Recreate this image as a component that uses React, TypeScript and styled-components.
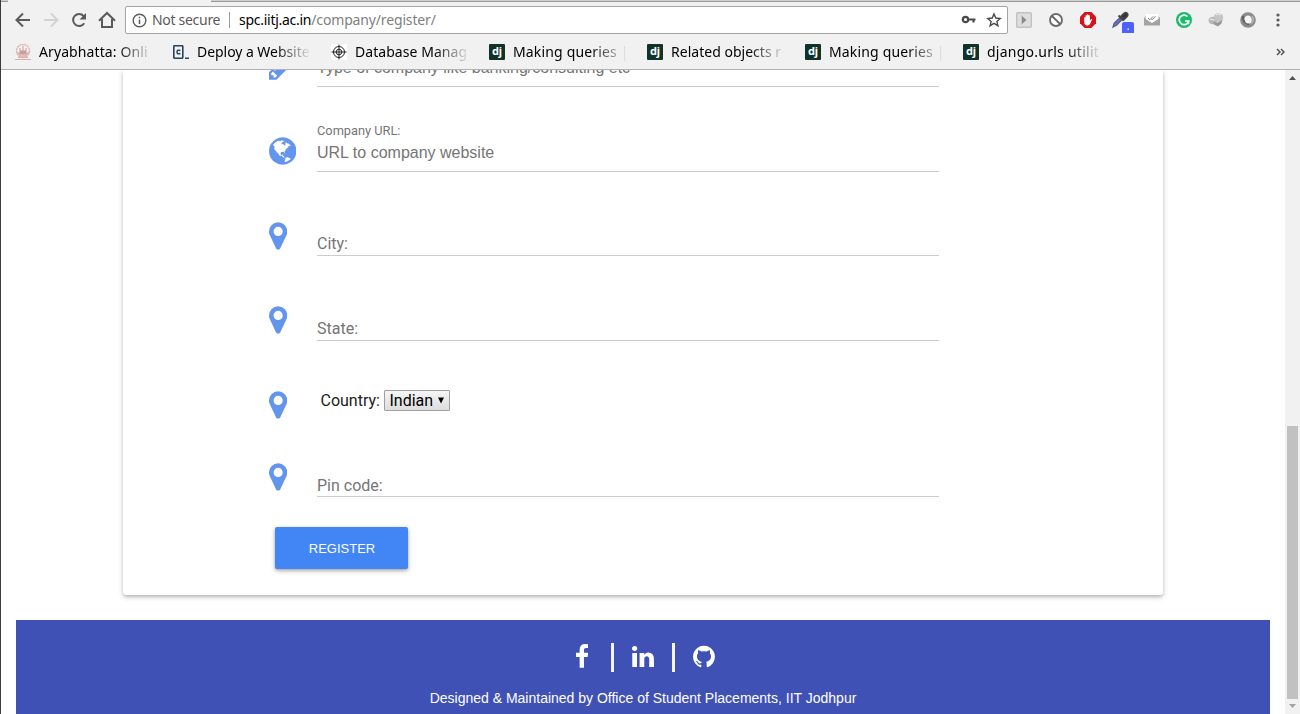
import React from "react";
import styled, { createGlobalStyle } from "styled-components";

const GlobalStyle = createGlobalStyle`
  * { box-sizing: border-box; }
  html, body { margin: 0; padding: 0; overflow: hidden; }
`;

const UI_FONT = `"Noto Sans", "Open Sans", sans-serif`;
const ARIAL = `"Liberation Sans", Arial, sans-serif`;

const Window = styled.div`
  display: flex;
  flex-direction: column;
  width: 1300px;
  height: 714px;
  border-left: 1px solid #3c3b37;
  background: #fff;
  overflow: hidden;
`;

const Chrome = styled.header`
  flex: none;
  height: 70px;
  background: #f1f1f1;
  border-bottom: 1px solid #b1b1b1;
  font-family: ${UI_FONT};
`;

const TabStrip = styled.div`
  display: flex;
  justify-content: space-between;
  height: 2px;
`;

const TabEdge = styled.div<{ $w: number }>`
  width: ${(p) => p.$w}px;
  background: #cfcfcf;
  border-bottom: 1px solid #999;
`;

const Toolbar = styled.div`
  display: flex;
  align-items: center;
  height: 36px;
  padding-left: 8px;
`;

const ToolButton = styled.div<{ $w?: number }>`
  display: flex;
  align-items: center;
  justify-content: center;
  flex: none;
  width: ${(p) => p.$w ?? 28}px;
  height: 28px;
`;

const AddressBar = styled.div`
  display: flex;
  align-items: center;
  width: 883px;
  height: 28px;
  margin-left: 4px;
  padding: 0 5px 0 6px;
  background: #fff;
  border: 1px solid #a5a5a5;
  border-radius: 2px;
  font-size: 14px;
  line-height: 26px;
  white-space: pre;
`;

const Security = styled.span`
  margin-left: 5px;
  width: 69px;
  color: #5a5a5a;
  letter-spacing: -0.3px;
`;

const Divider = styled.span`
  width: 1px;
  height: 16px;
  margin: 0 9px 0 8px;
  background: #9d9d9d;
`;

const Url = styled.span`
  flex: 1;
  color: #808080;
  letter-spacing: -0.15px;
  b { font-weight: 400; color: #000; letter-spacing: -0.27px; }
`;

const AddressIcons = styled.span`
  display: flex;
  align-items: center;
  gap: 9px;
`;

const Bookmarks = styled.nav`
  display: flex;
  align-items: center;
  height: 28px;
  padding-left: 14px;
`;

const Bookmark = styled.div`
  display: flex;
  align-items: center;
  flex: none;
  width: 158px;
  height: 28px;
  svg { flex: none; }
`;

const BookmarkTitle = styled.span<{ $ls: number }>`
  width: 118px;
  margin-left: 8px;
  white-space: nowrap;
  color: #000;
  font-size: 14px;
  line-height: 24px;
  letter-spacing: ${(p) => p.$ls}px;
  mask-image: linear-gradient(to right, #000 78px, transparent 115px);
`;

const DjangoTile = styled.span`
  flex: none;
  width: 16px;
  height: 16px;
  background: #113228;
  border-radius: 1px;
  color: #fff;
  font: 700 11px/14px ${UI_FONT};
  text-align: center;
`;

const Overflow = styled.div`
  margin-left: 155px;
  svg { display: block; }
`;

const Viewport = styled.div`
  display: flex;
  flex: 1;
  min-height: 0;
`;

const Page = styled.main`
  display: flex;
  flex-direction: column;
  flex: 1;
  padding: 0 15px;
  overflow: hidden;
`;

const Card = styled.section`
  flex: none;
  width: 1040px;
  height: 525px;
  margin: 0 0 25px 107px;
  padding-left: 146px;
  border-radius: 0 0 3px 3px;
  background: #fff;
  box-shadow: 0 2px 5px rgba(0, 0, 0, 0.26), 0 2px 2px rgba(0, 0, 0, 0.06);
`;

const Row = styled.div<{ $h: number }>`
  display: grid;
  grid-template-columns: 48px 622px;
  grid-template-rows: 100%;
  align-items: end;
  height: ${(p) => p.$h}px;
`;

const RowIcon = styled.span<{ $pb: number }>`
  padding-bottom: ${(p) => p.$pb}px;
  svg { display: block; fill: #6495ed; }
`;

const Field = styled.div`
  display: flex;
  flex-direction: column;
  border-bottom: 1px solid #ccc;
`;

const SmallLabel = styled.label`
  color: #757575;
  font: 12.8px/15px Roboto, sans-serif;
`;

const TextInput = styled.input`
  width: 100%;
  height: 33px;
  padding: 0 0 4px;
  border: 0;
  outline: 0;
  background: none;
  font: 16px ${ARIAL};
  &::placeholder { color: #757575; opacity: 1; }
`;

const BigLabel = styled.label<{ $pb?: number }>`
  padding-bottom: ${(p) => p.$pb ?? 1}px;
  color: #757575;
  font: 16px/21px Roboto, sans-serif;
`;

const CountryLine = styled.div`
  display: flex;
  align-items: center;
  gap: 4.5px;
  padding: 0 0 14px 3.5px;
  color: #212121;
  font: 16px/21px Roboto, sans-serif;
`;

const SelectBox = styled.button`
  display: flex;
  align-items: center;
  justify-content: space-between;
  width: 66px;
  height: 21px;
  padding: 0 5px 0 4px;
  border: 1px solid #a0a0a0;
  border-radius: 1px;
  background: linear-gradient(#f5f5f5, #dddddd);
  color: #000;
  font: 16px/19px Roboto, sans-serif;
`;

const RegisterButton = styled.button`
  display: block;
  width: 133px;
  height: 42px;
  margin: 30px 0 0 6px;
  padding: 1px 0 0 1px;
  border: 0;
  border-radius: 2px;
  background: #4285f4;
  color: #fff;
  font: 13px/41px ${ARIAL};
  box-shadow: 0 2px 5px rgba(0, 0, 0, 0.26), 0 1px 3px rgba(0, 0, 0, 0.16);
`;

const Footer = styled.footer`
  display: flex;
  flex-direction: column;
  flex: 1;
  align-items: center;
  padding-top: 23px;
  background: #3f51b5;
  color: #fff;
  font: 14px/20px ${ARIAL};
`;

const Social = styled.div`
  display: flex;
  align-items: flex-start;
  height: 29px;
  margin: 0 0 16px 5px;
  svg { display: block; fill: #fff; margin-top: 1px; }
`;

const Bar = styled.span<{ $l: number; $r: number }>`
  width: 3px;
  height: 29px;
  margin: 0 ${(p) => p.$r}px 0 ${(p) => p.$l}px;
  background: #f4f5fb;
`;

const Scrollbar = styled.aside`
  display: flex;
  flex-direction: column;
  align-items: center;
  justify-content: space-between;
  width: 15px;
  background: #f1f1f1;
  svg { display: block; flex: none; }
`;

const Track = styled.div`
  flex: 1;
  display: flex;
  align-items: flex-end;
`;

const Thumb = styled.div`
  width: 11px;
  height: 273px;
  background: #c1c1c1;
`;

const PIN =
  "M1152 640q0-106-75-181t-181-75-181 75-75 181 75 181 181 75 181-75 75-181zm256 0q0 109-33 179l-364 774q-16 33-47.5 52t-67.5 19-67.5-19-46.5-52l-365-774q-33-70-33-179 0-212 150-362t362-150 362 150 150 362z";
const PENCIL =
  "M491 1536l91-91-235-235-91 91v107h128v128h107zm523-928q0-22-22-22-10 0-17 7l-542 542q-7 7-7 17 0 22 22 22 10 0 17-7l542-542q7-7 7-17zm-54-192l416 416-832 832h-416v-416zm683 96q0 53-37 90l-166 166-416-416 166-165q36-38 90-38 53 0 91 38l235 234q37 39 37 91z";
const GLOBE =
  "M896 128q209 0 385.5 103t279.5 279.5 103 385.5-103 385.5-279.5 279.5-385.5 103-385.5-103-279.5-279.5-103-385.5 103-385.5 279.5-279.5 385.5-103zm274 521q-2 1-9.5 9.5t-13.5 9.5q2 0 4.5-5t5-11 3.5-7q6-7 22-15 14-6 52-12 34-8 51 11-2-2 9.5-13t14.5-12q3-2 15-4.5t15-7.5l2-22q-12 1-17.5-7t-6.5-21q0 2-6 8 0-7-4.5-8t-11.5 1-9 1q-10-3-15-7.5t-8-16.5-4-15q-2-5-9.5-11t-9.5-10q-1-2-2.5-5.5t-3-6.5-4-5.5-5.5-2.5-7 5-7.5 10-4.5 5q-3-2-6-1.5t-4.5 1-4.5 3-5 3.5q-3 2-8.5 3t-8.5 2q15-5-1-11-10-4-16-3 9-4 7.5-12t-8.5-14h5q-1-4-8.5-8.5t-17.5-8.5-13-6q-8-5-34-9.5t-33-.5q-5 6-4.5 10.5t4 14 3.5 12.5q1 6-5.5 13t-6.5 12q0 7 14 15.5t10 21.5q-3 8-16 16t-16 12q-5 8-1.5 18.5t10.5 16.5q2 2 1.5 4t-3.5 4.5-5.5 4-6.5 3.5l-3 2q-11 5-20.5-6t-13.5-26q-7-25-16-30-23-8-29 1-5-13-41-26-25-9-58-4 6-1 0-15-7-15-19-12 3-6 4-17.5t1-13.5q3-13 12-23 1-1 7-8.5t9.5-13.5.5-6q35 4 50-11 5-5 11.5-17t10.5-17q9-6 14-5.5t14.5 5.5 14.5 5q14 1 15.5-11t-7.5-20q12 1 3-17-4-7-8-9-12-4-27 5-8 4 2 8-1-1-9.5 10.5t-16.5 17.5-16-5q-1-1-5.5-13.5t-9.5-13.5q-8 0-16 15 3-8-11-15t-24-8q19-12-8-27-7-4-20.5-5t-19.5 4q-5 7-5.5 11.5t5 8 10.5 5.5 11.5 4 8.5 3q14 10 8 14-2 1-8.5 3.5t-11.5 4.5-6 4q-3 4 0 14t-2 14q-5-5-9-17.5t-7-16.5q7 9-25 6l-10-1q-4 0-16 2t-20.5 1-13.5-8q-4-8 0-20 1-4 4-2-4-3-11-9.5t-10-8.5q-46 15-94 41 6 1 12-1 5-2 13-6.5t10-5.5q34-14 42-7l5-5q14 16 20 25-7-4-30-1-20 6-22 12 7 12 5 18-4-3-11.5-10t-14.5-11-15-5q-16 0-22 1-146 80-235 222 7 7 12 8 4 1 5 9t2.5 11 11.5-3q9 8 3 19 1-1 44 27 19 17 21 21 3 11-10 18-1-2-9-9t-9-4q-3 5 .5 18.5t10.5 12.5q-7 0-9.5 16t-2.5 35.5-1 23.5l2 1q-3 12 5.5 34.5t21.5 19.5q-13 3 20 43 6 8 8 9 3 2 12 7.5t15 10 10 10.5q4 5 10 22.5t14 23.5q-2 6 9.5 20t10.5 23q-1 0-2.5 1t-2.5 1q3 7 15.5 14t15.5 13q1 3 2 10t3 11 8 2q2-20-24-62-15-25-17-29-3-5-5.5-15.5t-4.5-14.5q2 0 6 1.5t8.5 3.5 7.5 4 2 3q-3 7 2 17.5t12 18.5 17 19 12 13q6 6 14 19.5t0 13.5q9 0 20 10.5t17 19.5q5 8 8 26t5 24q2 7 8.5 13.5t12.5 9.5l16 8 13 7q5 2 18.5 10.5t21.5 11.5q10 4 16 4t14.5-2.5 13.5-3.5q15-2 29 15t21 21q36 19 55 11-2 1 .5 7.5t8 15.5 9 14.5 5.5 8.5q5 6 18 15t18 15q6-4 7-9-3 8 7 20t18 10q14-3 14-32-31 15-49-18 0-1-2.5-5.5t-4-8.5-2.5-8.5 0-7.5 5-3q9 0 10-3.5t-2-12.5-4-13q-1-8-11-20t-12-15q-5 9-16 8t-16-9q0 1-1.5 5.5t-1.5 6.5q-13 0-15-1 1-3 2.5-17.5t3.5-22.5q1-4 5.5-12t7.5-14.5 4-12.5-4.5-9.5-17.5-2.5q-19 1-26 20-1 3-3 10.5t-5 11.5-9 7q-7 3-24 2t-24-5q-13-8-22.5-29t-9.5-37q0-10 2.5-26.5t3-25-5.5-24.5q3-2 9-9.5t10-10.5q2-1 4.5-1.5t4.5 0 4-1.5 3-6q-1-1-4-3-3-3-4-3 7 3 28.5-1.5t27.5 1.5q15 11 22-2 0-1-2.5-9.5t-.5-13.5q5 27 29 9 3 3 15.5 5t17.5 5q3 2 7 5.5t5.5 4.5 5-.5 8.5-6.5q10 14 12 24 11 40 19 44 7 3 11 2t4.5-9.5 0-14-1.5-12.5l-1-8v-18l-1-8q-15-3-18.5-12t1.5-18.5 15-18.5q1-1 8-3.5t15.5-6.5 12.5-8q21-19 15-35 7 0 11-9-1 0-5-3t-7.5-5-4.5-2q9-5 2-16 5-3 7.5-11t7.5-10q9 12 21 2 8-8 1-16 5-7 20.5-10.5t18.5-9.5q7 2 8-2t1-12 3-12q4-5 15-9t13-5l17-11q3-4 0-4 18 2 31-11 10-11-6-20 3-6-3-9.5t-15-5.5q3-1 11.5-.5t10.5-1.5q15-10-7-16-17-5-43 12zm-163 877q206-36 351-189-3-3-12.5-4.5t-12.5-3.5q-18-7-24-8 1-7-2.5-13t-8-9-12.5-8-11-7q-2-2-7-6t-7-5.5-7.5-4.5-8.5-2-10 1l-3 1q-3 1-5.5 2.5t-5.5 3-4 3 0 2.5q-21-17-36-22-5-1-11-5.5t-10.5-7-10-1.5-11.5 7q-5 5-6 15t-2 13q-7-5 0-17.5t2-18.5q-3-6-10.5-4.5t-12 4.5-11.5 8.5-9 6.5-8.5 5.5-8.5 7.5q-3 4-6 12t-5 11q-2-4-11.5-6.5t-9.5-5.5q2 10 4 35t5 38q7 31-12 48-27 25-29 40-4 22 12 26 0 7-8 20.5t-7 21.5q0 6 2 16z";
const FACEBOOK =
  "M1343 12v264h-157q-86 0-116 36t-30 108v189h293l-39 296h-254v759h-306v-759h-255v-296h255v-218q0-186 104-288.5t277-102.5q147 0 228 12z";
const LINKEDIN =
  "M477 625v991h-330v-991h330zm21-306q1 73-50.5 122t-135.5 49h-2q-82 0-132-49t-50-122q0-74 51.5-122.5t134.5-48.5 133 48.5 51 122.5zm1166 729v568h-329v-530q0-105-40.5-164.5t-126.5-59.5q-63 0-105.5 34.5t-63.5 85.5q-11 30-11 81v553h-329q2-399 2-647t-1-296l-1-48h329v144h-2q20-32 41-56t56.5-52 87-43.5 114.5-15.5q171 0 275 113.5t104 332.5z";
const GITHUB =
  "M896 128q209 0 385.5 103t279.5 279.5 103 385.5q0 251-146.5 451.5t-378.5 277.5q-27 5-40-7t-13-30q0-3 .5-76.5t.5-134.5q0-97-52-142 57-6 102.5-18t94-39 81-66.5 53-105 20.5-150.5q0-119-79-206 37-91-8-204-28-9-81 11t-92 44l-38 24q-93-26-192-26t-192 26q-16-11-42.5-27t-83.5-38.5-85-13.5q-45 113-8 204-79 87-79 206 0 85 20.5 150t52.5 105 80.5 67 94 39 102.5 18q-39 36-49 103-21 10-45 15t-57 5-65.5-21.5-55.5-62.5q-19-32-48.5-52t-49.5-24l-20-3q-21 0-29 4.5t-5 11.5 9 14 13 12l7 5q22 10 43.500 38t31.500 51l10 23q13 38 44 61.500t67 30 69.500 7 55.500-3.500l23-4q0 38 .500 88.500t.500 54.500q0 18-13 30t-40 7q-232-77-378.500-277.500t-146.500-451.500q0-209 103-385.500t279.500-279.500 385.500-103z";

/* Font glyph drawn on a 1792-unit em, cropped to its advance width. */
function Glyph({ d, em, x, w }: { d: string; em: number; x: number; w: number }) {
  return (
    <svg width={(w * em) / 1792} height={em} viewBox={`${x} 0 ${w} 1792`}>
      <path d={d} />
    </svg>
  );
}

const Pin = () => <Glyph d={PIN} em={32} x={384} w={1024} />;

function NavIcon({ d, color = "#5a5a5a" }: { d: string; color?: string }) {
  return (
    <svg width="20" height="20" viewBox="0 0 20 20" fill="none" stroke={color} strokeWidth="2">
      <path d={d} />
    </svg>
  );
}

const extensions: React.ReactNode[] = [
  <svg width="16" height="16" viewBox="0 0 16 16">
    <rect x=".7" y=".7" width="14.6" height="14.6" rx="1" fill="#dedede" stroke="#c2c2c2" strokeWidth="1.4" />
    <path d="M5.5 3.5v9" stroke="#c6c6c6" />
    <path d="M6 4l4.5 4L6 12z" fill="#8a8a8a" />
  </svg>,
  <svg width="16" height="16" viewBox="0 0 16 16" fill="none">
    <circle cx="8" cy="8" r="6" fill="#fff" stroke="#6c6c6c" strokeWidth="1.9" />
    <path d="M4 4l8 8" stroke="#6c6c6c" strokeWidth="1.9" />
  </svg>,
  <svg width="16" height="16" viewBox="0 0 16 16">
    <path d="M4.7 0h6.6L16 4.7v6.6L11.3 16H4.7L0 11.300V4.700z" fill="#d8121b" />
    <path
      d="M4.200 9.200V5.400q.7-1 1.300 0V3.600q.7-1.100 1.400 0v-.8q.8-1 1.500 0v.8q.8-1 1.500 0v4.800l1-1.200q.8-.4 1.200.3l-2 4.300q-.6 1.600-2.300 1.600H7.200q-3 0-3-4z"
      fill="#fff"
    />
  </svg>,
  <svg width="30" height="26" viewBox="0 0 30 26">
    <path d="M8 20l1.200-4 5.300-5 2.200 2-5.200 5.200z" fill="#5f70d8" stroke="#5a5f80" strokeWidth="1.200" />
    <path d="M13.500 8.500l5 5M16 9.500l3-3q1.800-1.500 3.100-.2t-.1 3.100l-3 3z" fill="#333" stroke="#444" strokeWidth="1.800" />
    <rect x="17" y="15" width="12" height="12" rx="2" fill="#4f60ff" />
    <rect x="22.500" y="21.500" width="1.500" height="1.500" fill="#dfe3ff" />
  </svg>,
  <svg width="16" height="16" viewBox="0 0 16 16">
    <path d="M0 6l3-4h10l3 4v7H0z" fill="#a6a6a6" />
    <path d="M1.500 2h13v6L8 11.500 1.500 8z" fill="#fff" />
    <path d="M0 6l8 5 8-5v7.500H0z" fill="#a3a3a3" />
    <path d="M2 5l6 5.500L14 5V2H2z" fill="#fff" />
    <path d="M4 6l1.800 1.800L9 4.500M7.500 7.500l.5.4 3.500-3.600" fill="none" stroke="#777" />
  </svg>,
  <svg width="16" height="16" viewBox="0 0 16 16">
    <circle cx="8" cy="8" r="8" fill="#1cba6d" />
    <path d="M11.500 4.500A4.800 4.800 0 1 0 12.700 9H9" fill="none" stroke="#fff" strokeWidth="1.700" />
    <path d="M10.800 11.500l2 .5V9" fill="none" stroke="#fff" />
  </svg>,
  <svg width="16" height="16" viewBox="0 0 16 16">
    <ellipse cx="5" cy="8.500" rx="4.500" ry="3.800" fill="#b5b5b5" />
    <circle cx="10.500" cy="5.500" r="4.600" fill="#c4c4c4" />
    <path d="M5 9.500q5 3 9.500-2l-1 4-3.500 3-4-2z" fill="#999" />
    <path d="M8 3q3-2 5 0M2 7.500q2-1 4 1" stroke="#eee" strokeWidth="1.200" fill="none" />
  </svg>,
  <svg width="16" height="16" viewBox="0 0 16 16" fill="none">
    <circle cx="8" cy="8" r="5.800" stroke="#8b8b8b" strokeWidth="4" />
    <path d="M3 4q-1 6 6 8.500" stroke="#5f5f5f" strokeWidth="2" />
    <path d="M12 4q3 4-1 8" stroke="#b5b5b5" strokeWidth="1.500" />
    <ellipse cx="8" cy="7.500" rx="3" ry="4" fill="#f6f6f6" />
  </svg>,
];

const ArchIcon = () => (
  <svg width="16" height="16" viewBox="0 0 16 16" fill="none" stroke="#d9b0b0">
    <circle cx="8" cy="7" r="6.500" strokeWidth="1.300" strokeDasharray="2 .6" />
    <path d="M8 2v9M5 4v7M11 4v7M2.500 8l3 4h5l3-4" strokeWidth="1.300" />
    <path d="M5 8.500h6" stroke="#cc9c9c" strokeWidth="4" />
    <path d="M0 15.500h16M3 13.500h10" strokeWidth="1" />
  </svg>
);

const DeployIcon = () => (
  <svg width="16" height="16" viewBox="0 0 16 16" fill="none" stroke="#27425a">
    <rect x=".8" y="1.800" width="9" height="12.400" rx=".6" strokeWidth="1.600" />
    <path d="M7.400 6.500q-3.400-1.200-3.400 1.500t3.400 1.500M12 14.300h4" strokeWidth="1.500" />
  </svg>
);

const TargetIcon = () => (
  <svg width="16" height="16" viewBox="0 0 16 16" fill="none" stroke="#222">
    <rect width="16" height="16" fill="#fff" stroke="none" />
    <circle cx="8" cy="8" r="5.500" />
    <circle cx="8" cy="8" r="2.800" />
    <path d="M8 .5v15M.5 8h15" />
  </svg>
);

const Django = () => <DjangoTile>dj</DjangoTile>;

const bookmarks: { icon: React.ReactNode; title: string; spacing: number }[] = [
  { icon: <ArchIcon />, title: "Aryabhatta: Onli", spacing: 0.1 },
  { icon: <DeployIcon />, title: "Deploy a Website", spacing: -0.05 },
  { icon: <TargetIcon />, title: "Database Manag", spacing: 0.05 },
  { icon: <Django />, title: "Making queries |", spacing: 0.16 },
  { icon: <Django />, title: "Related objects r", spacing: 0.02 },
  { icon: <Django />, title: "Making queries |", spacing: 0.16 },
  { icon: <Django />, title: "django.urls utilit", spacing: 0.25 },
];

export default function App() {
  return (
    <>
      <GlobalStyle />
      <Window>
        <Chrome>
          <TabStrip>
            <TabEdge $w={7} />
            <TabEdge $w={1089} />
          </TabStrip>
          <Toolbar>
            <ToolButton>
              <NavIcon d="M17 10H4M10 3.500L3.500 10l6.500 6.500" />
            </ToolButton>
            <ToolButton>
              <NavIcon d="M3 10h13M10 3.500l6.500 6.500-6.500 6.500" color="#d2d2d2" />
            </ToolButton>
            <ToolButton>
              <svg width="20" height="20" viewBox="0 0 20 20">
                <path d="M15.200 13.200A6 6 0 1 1 14.600 6" fill="none" stroke="#5a5a5a" strokeWidth="2" />
                <path d="M17 3v6.500h-6.500z" fill="#5a5a5a" />
              </svg>
            </ToolButton>
            <ToolButton>
              <NavIcon d="M2 10.700l8-7.700 8 7.700M5 9v8h10V9" />
            </ToolButton>
            <AddressBar>
              <svg width="15" height="15" viewBox="0 0 15 15" fill="none" stroke="#5a5a5a">
                <circle cx="7.500" cy="7.500" r="6.300" strokeWidth="1.400" />
                <path d="M7.500 6.500v4.500M7.500 3.800v1.500" strokeWidth="1.500" />
              </svg>
              <Security>Not secure</Security>
              <Divider />
              <Url>
                <b>spc.iitj.ac.in</b>/company/register/
              </Url>
              <AddressIcons>
                <svg width="16" height="16" viewBox="0 0 16 16" fill="none" stroke="#4a4a4a">
                  <circle cx="4.500" cy="7.500" r="2.700" strokeWidth="2.200" />
                  <path d="M8 7.500h6.500M12.500 7.500v3" strokeWidth="2.200" />
                </svg>
                <svg width="16" height="16" viewBox="0 0 16 16" fill="none" stroke="#4a4a4a">
                  <path
                    d="M8 2l1.800 4 4.400.5-3.300 2.900 1 4.300L8 11.400l-3.900 2.300 1-4.300L1.800 6.500 6.200 6z"
                    strokeWidth="1.400"
                  />
                </svg>
              </AddressIcons>
            </AddressBar>
            {extensions.map((icon, i) => (
              <ToolButton key={i} $w={32}>
                {icon}
              </ToolButton>
            ))}
            <ToolButton>
              <svg width="4" height="14" viewBox="0 0 4 14" fill="#5a5a5a">
                <circle cx="2" cy="2" r="1.600" />
                <circle cx="2" cy="7" r="1.600" />
                <circle cx="2" cy="12" r="1.600" />
              </svg>
            </ToolButton>
          </Toolbar>
          <Bookmarks>
            {bookmarks.map((b, i) => (
              <Bookmark key={i}>
                {b.icon}
                <BookmarkTitle $ls={b.spacing}>{b.title}</BookmarkTitle>
              </Bookmark>
            ))}
            <Overflow>
              <svg width="9" height="8" viewBox="0 0 9 8" fill="none" stroke="#555" strokeWidth="1.500">
                <path d="M1 1l3 3-3 3M5 1l3 3-3 3" />
              </svg>
            </Overflow>
          </Bookmarks>
        </Chrome>
        <Viewport>
          <Page>
            <Card>
              <Row $h={17}>
                <RowIcon $pb={5.3}>
                  <Glyph d={PENCIL} em={32} x={128} w={1536} />
                </RowIcon>
                <Field>
                  <TextInput placeholder="Type of company like banking/consulting etc" />
                </Field>
              </Row>
              <Row $h={85}>
                <RowIcon $pb={5.5}>
                  <Glyph d={GLOBE} em={32} x={128} w={1536} />
                </RowIcon>
                <Field>
                  <SmallLabel>Company URL:</SmallLabel>
                  <TextInput placeholder="URL to company website" />
                </Field>
              </Row>
              <Row $h={84}>
                <RowIcon $pb={4.500}>
                  <Pin />
                </RowIcon>
                <Field>
                  <BigLabel>City:</BigLabel>
                </Field>
              </Row>
              <Row $h={85}>
                <RowIcon $pb={5.500}>
                  <Pin />
                </RowIcon>
                <Field>
                  <BigLabel>State:</BigLabel>
                </Field>
              </Row>
              <Row $h={84}>
                <RowIcon $pb={4.500}>
                  <Pin />
                </RowIcon>
                <CountryLine>
                  Country:
                  <SelectBox>
                    Indian
                    <svg width="6" height="7" viewBox="0 0 6 7">
                      <path d="M0 .5h6L3 6.500z" />
                    </svg>
                  </SelectBox>
                </CountryLine>
              </Row>
              <Row $h={72}>
                <RowIcon $pb={4.500}>
                  <Pin />
                </RowIcon>
                <Field>
                  <BigLabel $pb={0}>Pin code:</BigLabel>
                </Field>
              </Row>
              <RegisterButton>REGISTER</RegisterButton>
            </Card>
            <Footer>
              <Social>
                <Glyph d={FACEBOOK} em={25.6} x={479} w={864} />
                <Bar $l={22.5} $r={18} />
                <Glyph d={LINKEDIN} em={25.6} x={128} w={1536} />
                <Bar $l={18} $r={18} />
                <Glyph d={GITHUB} em={25.6} x={128} w={1536} />
              </Social>
              Designed &amp; Maintained by Office of Student Placements, IIT Jodhpur
            </Footer>
          </Page>
          <Scrollbar>
            <svg width="15" height="15" viewBox="0 0 15 15">
              <path d="M4 10h7L7.500 6z" fill="#505050" />
            </svg>
            <Track>
              <Thumb />
            </Track>
            <svg width="15" height="15" viewBox="0 0 15 15">
              <path d="M4 5h7L7.500 9z" fill="#a3a3a3" />
            </svg>
          </Scrollbar>
        </Viewport>
      </Window>
    </>
  );
}
